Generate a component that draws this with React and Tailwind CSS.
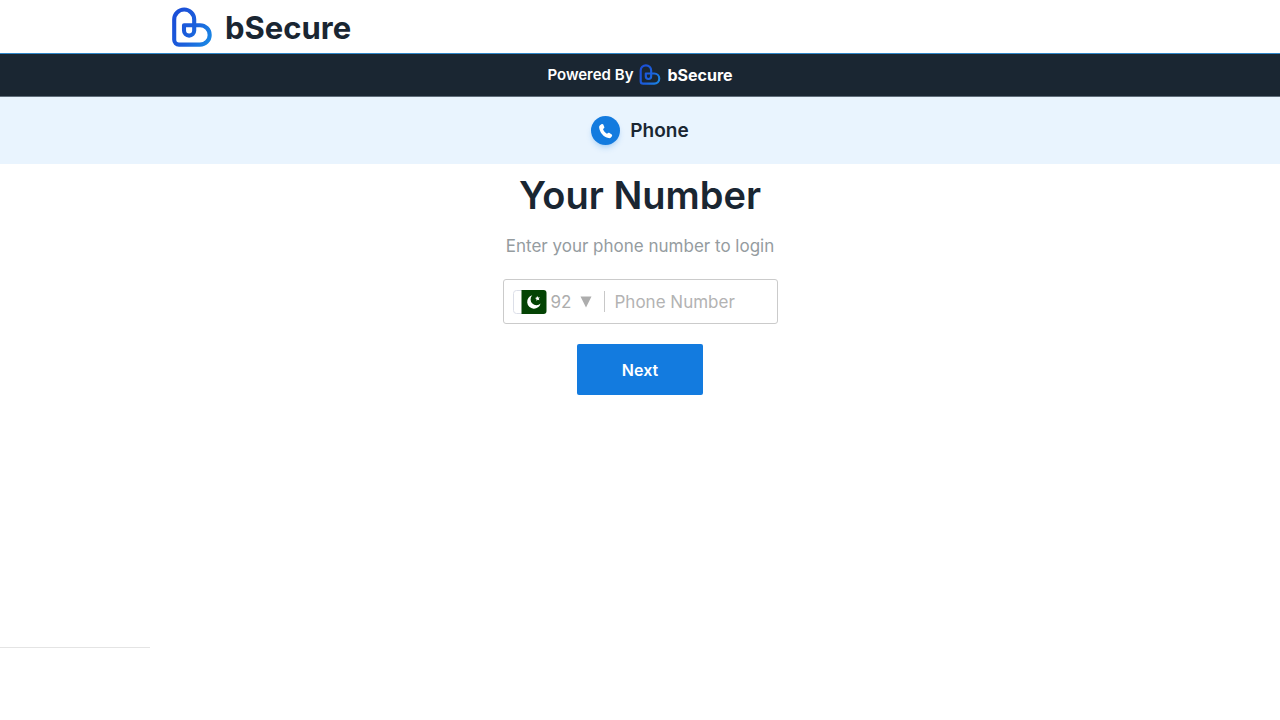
function LogoMark({ className, id }) {
  return (
    <svg viewBox="0 0 42 42" className={className} fill="none" aria-hidden="true">
      <defs>
        <linearGradient id={id} x1="4" y1="12" x2="40" y2="32" gradientUnits="userSpaceOnUse">
          <stop offset="0" stopColor="#1b50d8" />
          <stop offset="0.5" stopColor="#1b60dc" />
          <stop offset="1" stopColor="#1a86e4" />
        </linearGradient>
      </defs>
      <path
        d="M23.200 12.500V23.500a5.100 5.100 0 0 1-10.200 0V18.200H29a9.700 9.700 0 0 1 0 19.400H8a4.800 4.800 0 0 1-4.800-4.800V12.500a10 10 0 0 1 20 0Z"
        stroke={`url(#${id})`}
        strokeWidth="4.1"
        strokeLinejoin="round"
      />
    </svg>
  );
}

function PakistanFlag() {
  return (
    <svg viewBox="0 0 34 24" className="h-6 w-[34px] shrink-0" aria-hidden="true">
      <rect x="0.5" y="0.5" width="32" height="23" rx="3" fill="#fff" stroke="#dcdfe8" />
      <path d="M8.500 0H30.500a3 3 0 0 1 3 3V21a3 3 0 0 1-3 3H8.500Z" fill="#044304" />
      <path d="M19.200 5.300A6.800 6.800 0 1 0 27.600 13.400 5.600 5.600 0 1 1 19.200 5.300Z" fill="#fff" />
      <path d="m24.100 6.100 1 1.300 1.700-.1-1 1.400.6 1.600-1.600-.5-1.400 1v-1.700l-1.400-1 1.600-.5Z" fill="#fff" />
    </svg>
  );
}

export default function App() {
  return (
    <div className="min-h-screen bg-white font-['Inter',sans-serif] text-[#1a2632]">
      <header className="flex h-[54px] items-center border-b border-[#2f86c8] px-[171px] pt-[2px]">
        <a href="#" className="flex items-center gap-3">
          <LogoMark className="size-[42px]" id="brand-large" />
          <span className="text-[31px] leading-10 font-bold">bSecure</span>
        </a>
      </header>

      <div className="flex h-[43px] items-center justify-center gap-[6px] border-b border-[#5f6d7a] bg-[#1a2632] text-white">
        <span className="text-[15px] leading-5 font-semibold">Powered By</span>
        <a href="#" className="flex items-center gap-[6px]">
          <LogoMark className="size-[22px]" id="brand-small" />
          <span className="text-[16px] leading-5 font-bold">bSecure</span>
        </a>
      </div>

      <div className="flex h-[67px] items-center justify-center gap-[10px] bg-[#e9f4fe]">
        <span className="flex size-[29px] items-center justify-center rounded-full bg-[#137bdf] shadow-md shadow-[#137bdf]/20">
          <svg viewBox="0 0 16 16" className="size-4" fill="#fff" aria-hidden="true">
            <path d="M2 2.200 3.800 1.100c.6-.3 1.200-.1 1.500.5l1 2.400c.2.500.1 1-.3 1.300L5 6.100c.7 2 2 3.600 3.900 4.700l1.200-.8c.4-.3 1-.3 1.400 0l2.200 1.600c.5.400.6 1.100.2 1.600l-1 1.200c-.6.700-1.500.9-2.300.6C5.400 13.800 2 9.800 1.100 4.400 1 3.500 1.300 2.700 2 2.200Z" />
          </svg>
        </span>
        <span className="text-[19px] leading-7 font-semibold">Phone</span>
      </div>

      <main className="flex flex-col items-center">
        <h1 className="pt-[7px] text-[38px] leading-[48px] font-semibold">Your Number</h1>
        <p className="mt-[15px] text-[17px] leading-6 text-[#959c9f]">Enter your phone number to login</p>

        <form className="mt-[21px] flex flex-col items-center" onSubmit={(e) => e.preventDefault()}>
          <div className="flex h-[45px] w-[275px] items-center rounded-[3px] border border-[#cbcbcb] px-[9px] text-[17px] text-[#adadad]">
            <PakistanFlag />
            <label className="relative ml-1 flex items-center">
              <select
                aria-label="Country code"
                defaultValue="92"
                className="w-[45px] appearance-none bg-transparent leading-6 outline-none"
              >
                <option value="92">92</option>
              </select>
              <svg viewBox="0 0 12 12" className="pointer-events-none absolute right-1 size-3" fill="#adadad" aria-hidden="true">
                <path d="M.5.5h11L6 11.500Z" />
              </svg>
            </label>
            <span className="ml-2 h-[21px] w-px bg-[#c8c8c8]" />
            <input
              type="tel"
              aria-label="Phone Number"
              placeholder="Phone Number"
              className="ml-[10px] min-w-0 flex-1 leading-6 text-[#1a2632] outline-none placeholder:text-[#b3b3b3]"
            />
          </div>
          <button
            type="submit"
            className="mt-5 h-[51px] w-[126px] rounded-[2px] bg-[#137bdf] text-[16px] font-semibold text-white"
          >
            Next
          </button>
        </form>
      </main>

      <hr className="mt-[252px] w-[150px] border-[#e4e4e4]" />
    </div>
  );
}
